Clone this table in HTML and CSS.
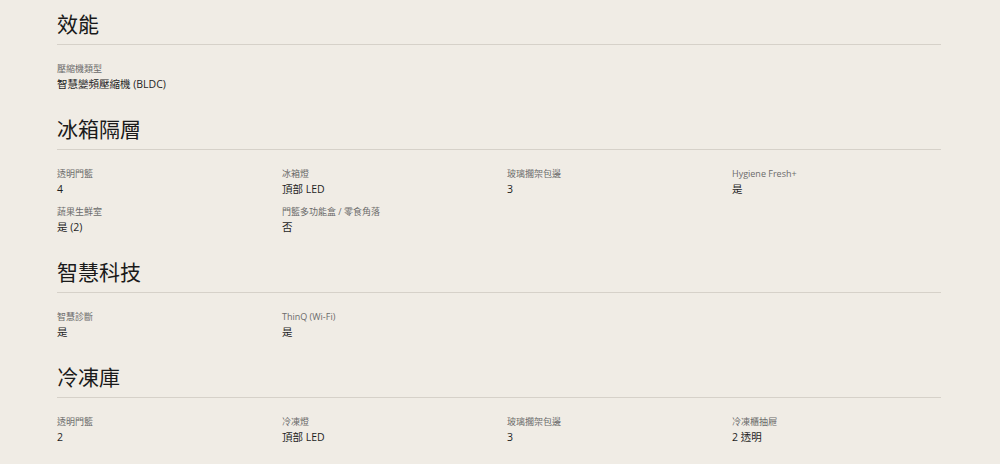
FILE: index.html
```html
<!DOCTYPE html>
<html lang="zh-Hant">
<head>
<meta charset="utf-8">
<title>規格</title>
<link rel="stylesheet" href="styles.css">
</head>
<body>
<main class="specs">
  <section class="spec-section">
    <h2 class="spec-title">效能</h2>
    <div class="spec-grid">
      <div class="spec-item"><div class="spec-label">壓縮機類型</div><div class="spec-value">智慧變頻壓縮機 (BLDC)</div></div>
    </div>
  </section>
  <section class="spec-section">
    <h2 class="spec-title">冰箱隔層</h2>
    <div class="spec-grid">
      <div class="spec-item"><div class="spec-label">透明門籃</div><div class="spec-value">4</div></div>
      <div class="spec-item"><div class="spec-label">冰箱燈</div><div class="spec-value">頂部 LED</div></div>
      <div class="spec-item"><div class="spec-label">玻璃擱架包邊</div><div class="spec-value">3</div></div>
      <div class="spec-item"><div class="spec-label">Hygiene Fresh+</div><div class="spec-value">是</div></div>
      <div class="spec-item"><div class="spec-label">蔬果生鮮室</div><div class="spec-value">是 (2)</div></div>
      <div class="spec-item"><div class="spec-label">門籃多功能盒 / 零食角落</div><div class="spec-value">否</div></div>
    </div>
  </section>
  <section class="spec-section">
    <h2 class="spec-title">智慧科技</h2>
    <div class="spec-grid">
      <div class="spec-item"><div class="spec-label">智慧診斷</div><div class="spec-value">是</div></div>
      <div class="spec-item"><div class="spec-label">ThinQ (Wi-Fi)</div><div class="spec-value">是</div></div>
    </div>
  </section>
  <section class="spec-section">
    <h2 class="spec-title">冷凍庫</h2>
    <div class="spec-grid">
      <div class="spec-item"><div class="spec-label">透明門籃</div><div class="spec-value">2</div></div>
      <div class="spec-item"><div class="spec-label">冷凍燈</div><div class="spec-value">頂部 LED</div></div>
      <div class="spec-item"><div class="spec-label">玻璃擱架包邊</div><div class="spec-value">3</div></div>
      <div class="spec-item"><div class="spec-label">冷凍櫃抽屜</div><div class="spec-value">2 透明</div></div>
    </div>
  </section>
</main>
</body>
</html>
```

FILE: styles.css
```css
html, body {
  margin: 0;
  padding: 0;
  background: #f0ece5;
}

body {
  font-family: "Open Sans", "Noto Sans CJK TC", sans-serif;
  color: #222;
}

.specs {
  width: 884px;
  padding: 7px 0 0 57px;
  display: flex;
  flex-direction: column;
  gap: 20px;
}

.spec-title {
  margin: 0;
  font-family: "Noto Sans CJK TC", sans-serif;
  font-size: 21px;
  line-height: 32px;
  font-weight: 400;
  color: #1a1a1a;
  padding-bottom: 5px;
  border-bottom: 1px solid #d6d1c9;
}

.spec-grid {
  display: grid;
  grid-template-columns: repeat(4, 209px);
  column-gap: 16px;
  row-gap: 7px;
  padding-top: 16px;
}

.spec-label {
  font-size: 9px;
  line-height: 15px;
  color: #6b6b6b;
}

.spec-value {
  font-size: 10.5px;
  line-height: 16px;
  color: #1e1e1e;
}
```
